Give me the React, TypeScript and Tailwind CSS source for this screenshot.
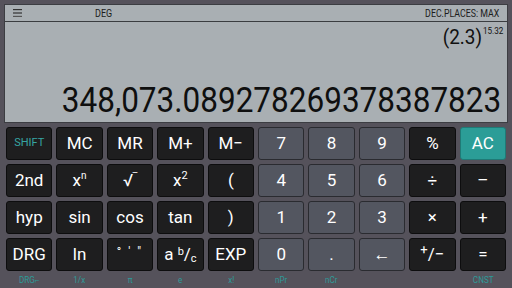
import React from "react";

type Kind = "dark" | "grey" | "teal";

type Key = { label: React.ReactNode; kind: Kind; size?: string; color?: string };

const rows: Key[][] = [
  [
    { label: "SHIFT", kind: "dark", size: "text-[11px]", color: "text-[#36a5a3]" },
    { label: "MC", kind: "dark" },
    { label: "MR", kind: "dark" },
    { label: "M+", kind: "dark" },
    { label: "M−", kind: "dark" },
    { label: "7", kind: "grey" },
    { label: "8", kind: "grey" },
    { label: "9", kind: "grey" },
    { label: "%", kind: "dark" },
    { label: "AC", kind: "teal" },
  ],
  [
    { label: "2nd", kind: "dark" },
    {
      label: (
        <span>
          x<span className="text-[10px] relative -top-[7px]">n</span>
        </span>
      ),
      kind: "dark",
    },
    {
      label: (
        <span>
          √<span className="relative -top-[4px] text-[12px]">‾</span>
        </span>
      ),
      kind: "dark",
    },
    {
      label: (
        <span>
          x<span className="text-[11px] relative -top-[7px]">2</span>
        </span>
      ),
      kind: "dark",
    },
    { label: "(", kind: "dark" },
    { label: "4", kind: "grey" },
    { label: "5", kind: "grey" },
    { label: "6", kind: "grey" },
    { label: "÷", kind: "dark" },
    { label: "–", kind: "dark" },
  ],
  [
    { label: "hyp", kind: "dark" },
    { label: "sin", kind: "dark" },
    { label: "cos", kind: "dark" },
    { label: "tan", kind: "dark" },
    { label: ")", kind: "dark" },
    { label: "1", kind: "grey" },
    { label: "2", kind: "grey" },
    { label: "3", kind: "grey" },
    { label: "×", kind: "dark" },
    { label: "+", kind: "dark" },
  ],
  [
    { label: "DRG", kind: "dark" },
    { label: "ln", kind: "dark" },
    { label: <span className="text-[12px] tracking-[2px] relative -top-[3px]">° ' "</span>, kind: "dark" },
    {
      label: (
        <span>
          a <span className="text-[11px] relative -top-[5px]">b</span>/
          <span className="text-[11px] relative top-[2px]">c</span>
        </span>
      ),
      kind: "dark",
    },
    { label: "EXP", kind: "dark" },
    { label: "0", kind: "grey" },
    { label: ".", kind: "grey" },
    { label: "←", kind: "grey" },
    {
      label: (
        <span>
          <span className="text-[13px] relative -top-[6px]">+</span>/−
        </span>
      ),
      kind: "dark",
    },
    { label: "=", kind: "dark" },
  ],
];

const subLabels = ["DRG⌐", "1/x", "π", "e", "x!", "nPr", "nCr", "", "", "CNST"];

const kindClass: Record<Kind, string> = {
  dark: "bg-[#1e1e1f] border-[#0d0d0e]",
  grey: "bg-[#535660] border-[#2a2b30]",
  teal: "bg-[#2b9d97] border-[#1f7a76]",
};

export default function App() {
  return (
    <div
      className="w-[512px] h-[288px] bg-[#55525b] overflow-hidden flex flex-col"
      style={{ fontFamily: "Roboto, 'Liberation Sans', sans-serif" }}
    >
      {/* Display */}
      <div className="mx-[4px] mt-[4px] h-[119px] bg-[#a9afb3] border border-[#3c3d42] flex flex-col">
        <div className="h-[17px] border-b border-[#3a3d40] flex items-center text-[10px] text-[#1c1c1c] px-[8px]">
          <svg width="9" height="8" viewBox="0 0 9 8" className="mr-[73px]">
            <rect x="0" y="0" width="9" height="1.2" fill="#333" />
            <rect x="0" y="3.4" width="9" height="1.2" fill="#333" />
            <rect x="0" y="6.8" width="9" height="1.2" fill="#555" />
          </svg>
          <span className="scale-x-[0.9] origin-left">DEG</span>
          <span className="ml-auto scale-x-[0.88] origin-right">DEC.PLACES: MAX</span>
        </div>
        <div className="flex justify-end pr-[4px] pt-[5px] text-[#111]">
          <span className="text-[21px] leading-none scale-x-[0.9] origin-right whitespace-nowrap">
            (2.3)<span className="text-[9px] relative -top-[10px] ml-[1px]">15.32</span>
          </span>
        </div>
        <div className="flex-1 flex items-end justify-end pr-[6px] pb-[4px]">
          <span className="text-[35px] leading-none text-[#0f0f0f] scale-x-[0.9] origin-right whitespace-nowrap">
            348,073.089278269378387823
          </span>
        </div>
      </div>

      {/* Keypad */}
      <div className="px-[6px] pt-[4px] grid grid-cols-10 gap-x-[4px] gap-y-[4px]">
        {rows.flat().map((k, i) => (
          <div
            key={i}
            className={`h-[33px] rounded-[3px] border flex items-center justify-center ${kindClass[k.kind]} ${
              k.size ?? "text-[17px]"
            } ${k.color ?? "text-white"}`}
          >
            {k.label}
          </div>
        ))}
      </div>
      <div className="px-[6px] grid grid-cols-10 gap-x-[4px] mt-[5px] text-[9px] text-[#2e9a98] leading-none">
        {subLabels.map((s, i) => (
          <div key={i} className="text-center scale-x-[0.9]">
            {s}
          </div>
        ))}
      </div>
    </div>
  );
}
